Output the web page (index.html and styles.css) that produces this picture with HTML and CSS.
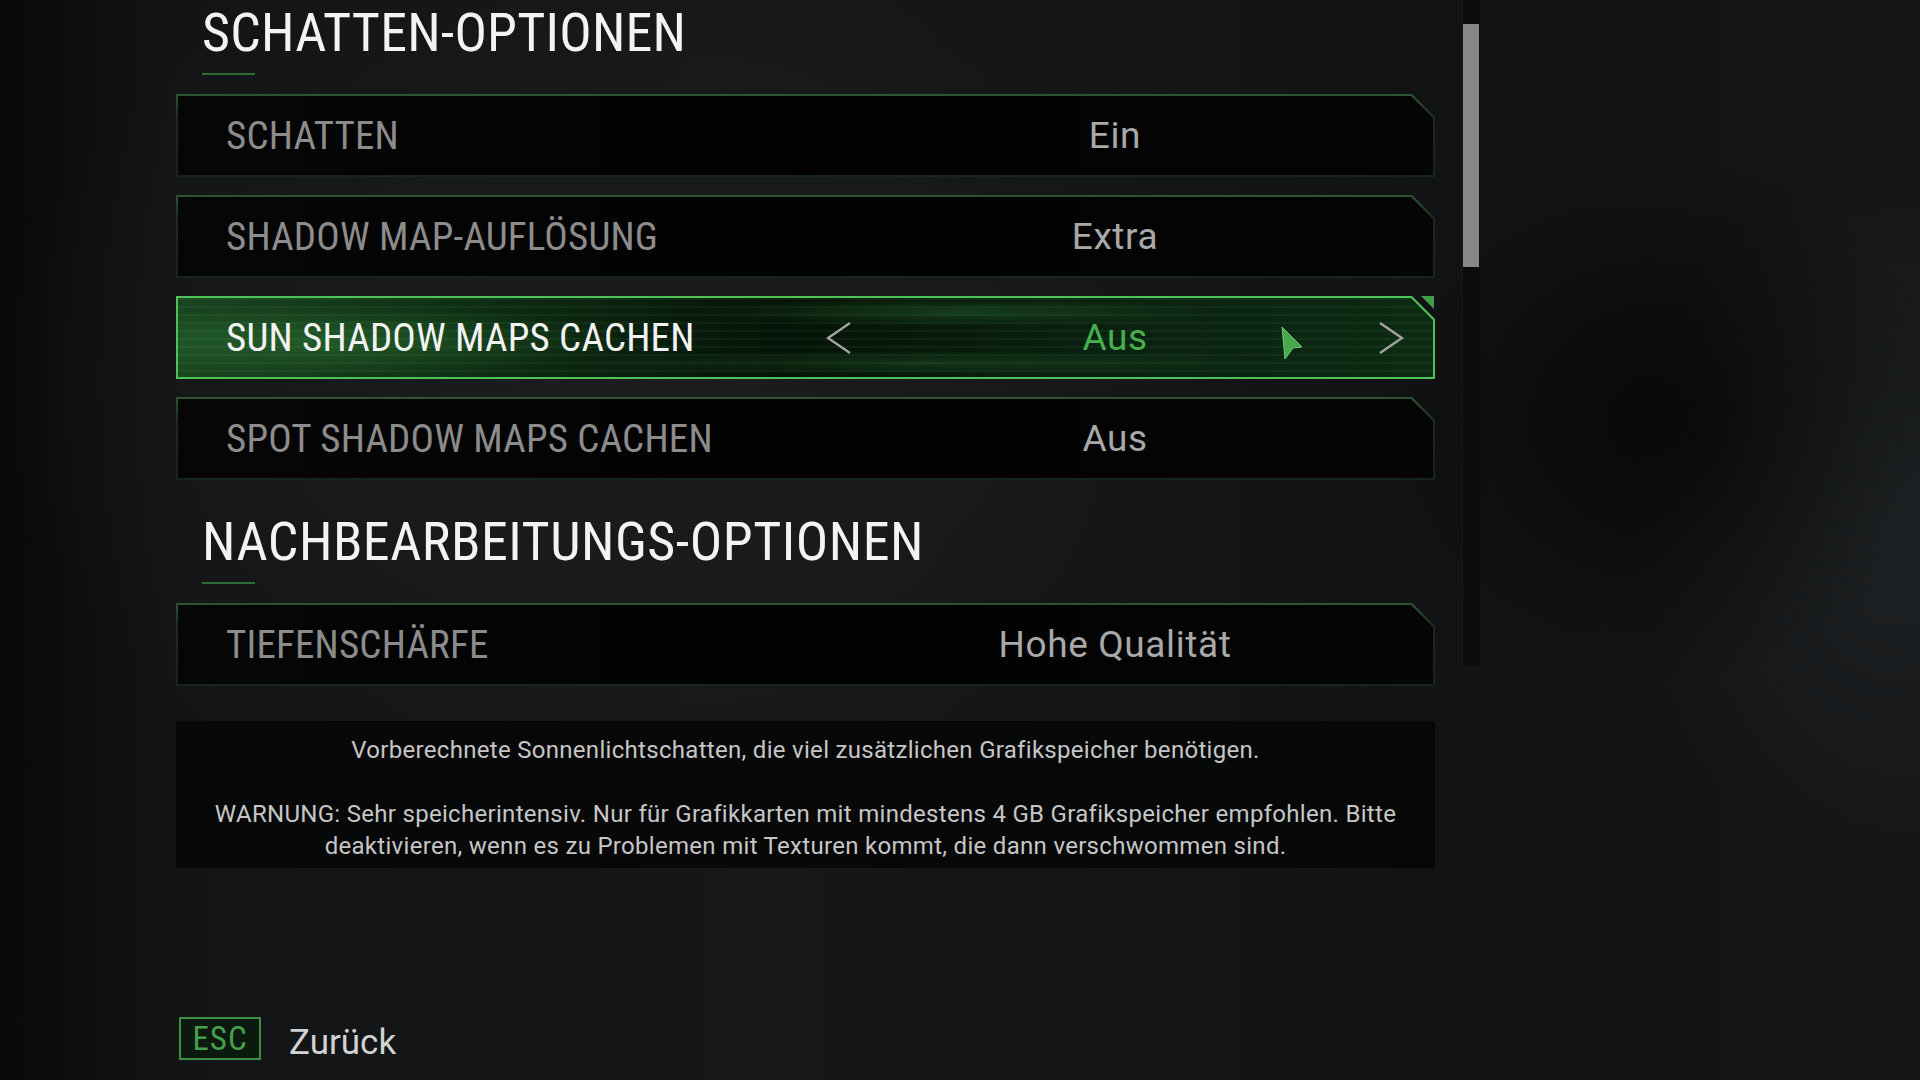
FILE: index.html
```html
<!DOCTYPE html>
<html lang="de">
<head>
  <meta charset="UTF-8">
  <title>Grafikoptionen</title>
  <link rel="stylesheet" href="styles.css">
</head>
<body>
<div class="page">
  <div class="main">
    <div class="panel">

      <!-- Schatten -->
      <h2 class="section-title">SCHATTEN-OPTIONEN</h2>
      <div class="title-line"></div>
      <div class="options">
        <div class="opt">
          <div class="frame"><div class="body">
            <span class="label">SCHATTEN</span>
            <div class="value-box">
              <svg class="arrow" viewBox="0 0 26 34"><path d="M24 2 L2 17 L24 32"/></svg>
              <span class="value">Ein</span>
              <svg class="arrow" viewBox="0 0 26 34"><path d="M2 2 L24 17 L2 32"/></svg>
            </div>
          </div></div>
        </div>
        <div class="opt">
          <div class="frame"><div class="body">
            <span class="label">SHADOW MAP-AUFLÖSUNG</span>
            <div class="value-box">
              <svg class="arrow" viewBox="0 0 26 34"><path d="M24 2 L2 17 L24 32"/></svg>
              <span class="value">Extra</span>
              <svg class="arrow" viewBox="0 0 26 34"><path d="M2 2 L24 17 L2 32"/></svg>
            </div>
          </div></div>
        </div>
        <div class="opt selected">
          <div class="frame"><div class="body">
            <span class="label">SUN SHADOW MAPS CACHEN</span>
            <div class="value-box">
              <svg class="arrow" viewBox="0 0 26 34"><path d="M24 2 L2 17 L24 32"/></svg>
              <span class="value">Aus</span>
              <svg class="arrow" viewBox="0 0 26 34"><path d="M2 2 L24 17 L2 32"/></svg>
            </div>
          </div></div>
          <span class="corner"></span>
          <svg class="cursor" viewBox="0 0 24 34">
            <path d="M2 1 L22 21 L13 22 L5 33 Z" fill="#48a74e" stroke="#6cc872" stroke-width="1"/>
          </svg>
        </div>
        <div class="opt">
          <div class="frame"><div class="body">
            <span class="label">SPOT SHADOW MAPS CACHEN</span>
            <div class="value-box">
              <svg class="arrow" viewBox="0 0 26 34"><path d="M24 2 L2 17 L24 32"/></svg>
              <span class="value">Aus</span>
              <svg class="arrow" viewBox="0 0 26 34"><path d="M2 2 L24 17 L2 32"/></svg>
            </div>
          </div></div>
        </div>
      </div>

      <!-- Nachbearbeitung -->
      <h2 class="section-title second">NACHBEARBEITUNGS-OPTIONEN</h2>
      <div class="title-line"></div>
      <div class="options">
        <div class="opt">
          <div class="frame"><div class="body">
            <span class="label">TIEFENSCHÄRFE</span>
            <div class="value-box">
              <svg class="arrow" viewBox="0 0 26 34"><path d="M24 2 L2 17 L24 32"/></svg>
              <span class="value">Hohe Qualität</span>
              <svg class="arrow" viewBox="0 0 26 34"><path d="M2 2 L24 17 L2 32"/></svg>
            </div>
          </div></div>
        </div>
      </div>

      <div class="desc">
        <p>Vorberechnete Sonnenlichtschatten, die viel zusätzlichen Grafikspeicher benötigen.</p>
        <p>WARNUNG: Sehr speicherintensiv. Nur für Grafikkarten mit mindestens 4 GB Grafikspeicher empfohlen. Bitte<br>deaktivieren, wenn es zu Problemen mit Texturen kommt, die dann verschwommen sind.</p>
      </div>
    </div>

    <div class="scroll-track"><div class="scroll-thumb"></div></div>
  </div>

  <div class="footer">
    <span class="key">ESC</span>
    <span class="back">Zurück</span>
  </div>
</div>
</body>
</html>
```
FILE: styles.css
```css
body {
  margin: 0;
  font-family: "Roboto Condensed", Roboto, "Liberation Sans", sans-serif;
  color: #ddd;
  background:
    radial-gradient(ellipse 420px 380px at 1660px 420px, rgba(0,0,0,0.6), transparent 70%),
    radial-gradient(ellipse 380px 520px at 1900px 520px, rgba(46,50,52,0.45), transparent 70%),
    radial-gradient(ellipse 900px 650px at 620px 380px, #1b1d1f, transparent 70%),
    linear-gradient(to right, #08090a 0%, #121416 9%, #151719 40%, #111315 75%, #131517 100%);
  overflow: hidden;
}
.page {
  height: 1080px;
  display: flex;
  flex-direction: column;
}
.main { display: flex; align-items: flex-start; }
.panel { margin-left: 176px; width: 1259px; padding-top: 3px; }

.section-title {
  margin: 0 0 0 26px;
  font-size: 54px;
  line-height: 60px;
  font-weight: 400;
  color: #f3f3f3;
  letter-spacing: 0.2px;
}
.section-title.second { margin-top: 32px; letter-spacing: 0.5px; }
.title-line {
  width: 53px; height: 2px;
  margin: 10px 0 19px 26px;
  background: #2e6a34;
}

.options { display: flex; flex-direction: column; gap: 18px; }
.opt { position: relative; }
.frame {
  padding: 2px;
  background: linear-gradient(to bottom, #2f5533 0%, #1a2b1c 30%, #17251a 100%);
  clip-path: polygon(0 0, calc(100% - 23px) 0, 100% 23px, 100% 100%, 0 100%);
}
.body {
  height: 79px;
  display: flex;
  align-items: center;
  padding: 0 29px 0 48px;
  background: linear-gradient(to right, #060606, #020202 50%, #050505);
  clip-path: polygon(0 0, calc(100% - 22px) 0, 100% 22px, 100% 100%, 0 100%);
}
.label {
  flex: 1;
  font-size: 39px;
  letter-spacing: 0.2px;
  color: #8c8c8c;
}
.value-box {
  width: 578px;
  display: flex;
  align-items: center;
}
.value {
  flex: 1;
  text-align: center;
  font-family: Roboto, "Liberation Sans", sans-serif;
  font-size: 37px;
  color: #a9a9a9;
  letter-spacing: 0.6px;
}
.arrow {
  width: 26px; height: 34px;
  fill: none;
  stroke: #a3a3a3;
  stroke-width: 2.4;
  visibility: hidden;
}

/* selected row */
.opt.selected .frame { background: #4cc257; }
.opt.selected .body {
  background:
    repeating-linear-gradient(to bottom, rgba(90,210,100,0.07) 0 2px, transparent 2px 8px),
    radial-gradient(ellipse 420px 50px at 12% 55%, rgba(60,150,70,0.35), transparent 70%),
    radial-gradient(ellipse 380px 20px at 62% 18%, rgba(60,160,70,0.25), transparent 70%),
    radial-gradient(ellipse 500px 18px at 60% 82%, rgba(60,160,70,0.2), transparent 70%),
    linear-gradient(to right, #1a4520 0%, #0f2f14 22%, #061308 48%, #0a2110 75%, #0d2a12 100%);
}
.opt.selected .label { color: #f2f2f2; }
.opt.selected .value { color: #45b04d; }
.opt.selected .arrow { visibility: visible; }
.corner {
  position: absolute;
  top: 0; right: 1px;
  width: 13px; height: 13px;
  background: #3f9f47;
  clip-path: polygon(0 0, 100% 0, 100% 100%);
}
.cursor {
  position: absolute;
  left: 1104px; top: 30px;
  width: 24px; height: 34px;
}

.desc {
  margin-top: 35px;
  padding: 13px 10px 6px;
  background: rgba(6,6,6,0.85);
  text-align: center;
  font-family: Roboto, "Liberation Sans", sans-serif;
  font-size: 24px;
  line-height: 32px;
  letter-spacing: 0.3px;
  color: #c6c6c6;
}
.desc p { margin: 0 0 32px; }
.desc p:last-child { margin-bottom: 0; }

.scroll-track {
  margin-left: 27px;
  width: 17px;
  height: 665px;
  background: #0a0b0b;
  border-left: 1px solid #141916;
}
.scroll-thumb {
  margin: 24px 0 0 0;
  width: 16px;
  height: 243px;
  background: #878787;
}

.footer {
  margin-top: auto;
  margin-bottom: 20px;
  height: 43px;
  padding-left: 179px;
  display: flex;
  align-items: center;
  gap: 28px;
}
.key {
  box-sizing: border-box;
  width: 82px; height: 43px;
  border: 2px solid #3c8e43;
  background: #0c190e;
  color: #45a04c;
  font-size: 33px;
  line-height: 39px;
  text-align: center;
  letter-spacing: 1px;
}
.back {
  padding-top: 8px;
  font-family: Roboto, "Liberation Sans", sans-serif;
  font-size: 35px;
  color: #d2d2d2;
}
```
